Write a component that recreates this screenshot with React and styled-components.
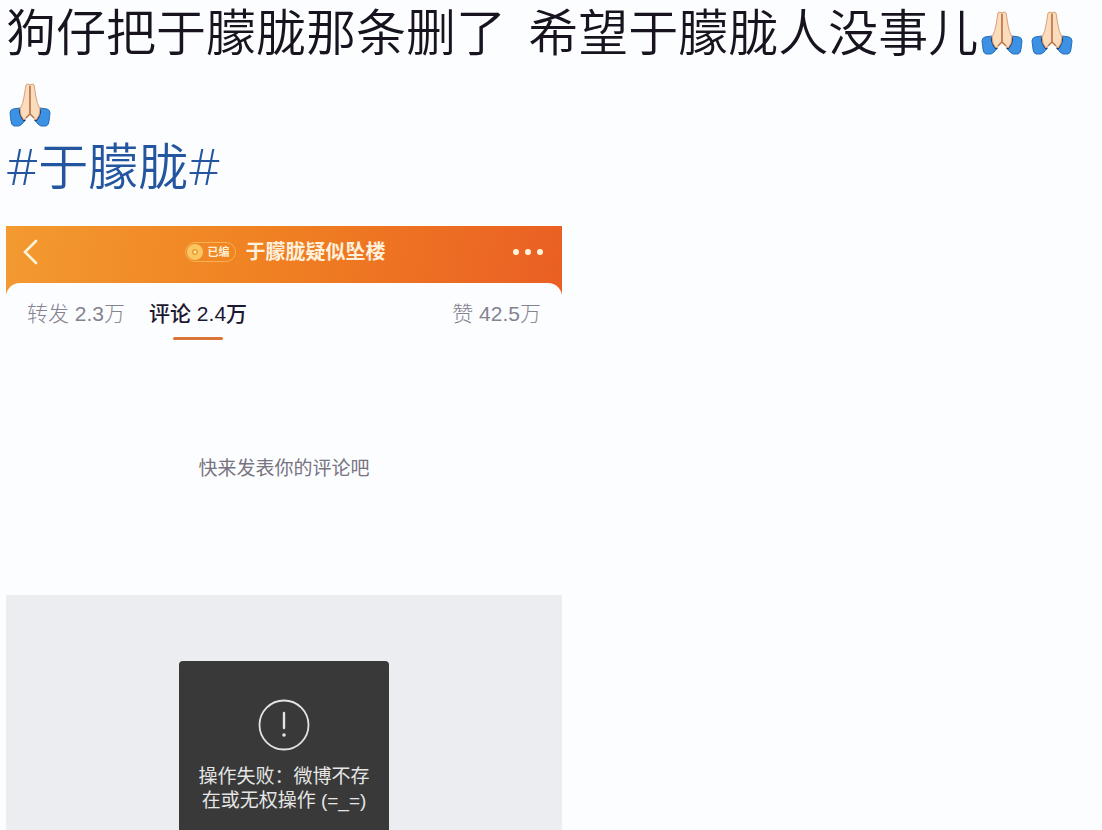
import React from 'react'
import styled, { createGlobalStyle } from 'styled-components'

const GlobalStyle = createGlobalStyle`
    * {
        box-sizing: border-box;
    }
    html, body {
        margin: 0;
        background: #fcfdff;
    }
    body {
        font-family: "Liberation Sans", "Noto Sans CJK SC", sans-serif;
    }
`
const Page = styled.main`
        min-height: 100vh;
        display: flex;
        flex-direction: column;
        padding: 0 6px;
`
const PostText = styled.p`
        margin: 0;
        font-family: "Noto Sans CJK SC", sans-serif;
        font-size: 50px;
        font-weight: 350;
        line-height: 58px;
        color: #17141f;
        white-space: pre-wrap;
`
const Emoji = styled.svg`
        width: 50px;
        height: 62px;
        padding-bottom: 16px;
        vertical-align: -21px;
`
const Topic = styled.a`
        align-self: flex-start;
        font-family: "Open Sans", "Noto Sans CJK SC", sans-serif;
        font-size: 50px;
        font-weight: 350;
        line-height: 44px;
        color: #2456a0;
        text-decoration: none;
`
const Card = styled.section`
        flex: 1;
        display: flex;
        flex-direction: column;
        width: 100%;
        max-width: 556px;
        margin-top: 38px;
        background: linear-gradient(100deg, #f39a31 0, #f08222 45%, #ea5f24 100%) no-repeat;
        background-size: 100% 68px;
`
const Header = styled.header`
        display: flex;
        align-items: center;
        justify-content: space-between;
        height: 57px;
        padding: 0 18px 6px 14px;
`
const IconButton = styled.button`
        display: flex;
        width: ${p => p.$width};
        padding: 0;
        border: 0;
        background: none;
        color: #fff3dc;
`
const Heading = styled.div`
        display: flex;
        align-items: center;
        gap: 10px;
`
const Badge = styled.span`
        display: flex;
        align-items: center;
        gap: 4px;
        height: 20px;
        padding: 0 5px 0 0;
        border: 1px solid #f8b052;
        border-radius: 10px;
        font-size: 11px;
        font-weight: bold;
        line-height: 18px;
        color: #fff0d2;
`
const Title = styled.h1`
        margin: 0;
        font-size: 20px;
        line-height: 28px;
        color: #fff0dc;
`
const Panel = styled.div`
        flex: 1;
        display: flex;
        flex-direction: column;
        border-radius: 14px 14px 0 0;
        background: #fcfdff;
`
const Tabs = styled.nav`
        display: flex;
        gap: 24px;
        height: 58px;
        padding: 16px 21px 0;
`
const Tab = styled.button`
        display: flex;
        flex-direction: column;
        align-items: center;
        gap: 8px;
        margin-left: ${p => p.$right ? 'auto' : '0'};
        padding: 0;
        border: 0;
        background: none;
        font-family: inherit;
        font-size: 21px;
        font-weight: ${p => p.$active ? 500 : 300};
        line-height: 30px;
        color: ${p => p.$active ? '#1c1830' : '#85828f'};

        &::after {
            content: "";
            width: 50px;
            height: 3px;
            border-radius: 2px;
            background: ${p => p.$active ? '#dc7437' : 'transparent'};
        }
`
const Empty = styled.p`
        display: flex;
        align-items: center;
        justify-content: center;
        height: 254px;
        margin: 0;
        padding-bottom: 4px;
        font-size: 19px;
        color: #77747f;
`
const Below = styled.div`
        flex: 1;
        display: flex;
        justify-content: center;
        padding-top: 66px;
        background: #ecedf1;
`
const Toast = styled.div`
        display: flex;
        flex-direction: column;
        align-items: center;
        gap: 14px;
        width: 210px;
        padding-top: 38px;
        border-radius: 4px 4px 0 0;
        background: #383938;
`
const Message = styled.p`
        margin: 0;
        font-size: 19px;
        line-height: 24px;
        text-align: center;
        color: #e6e6e6;
`

const Pray = () => {
  return (
    <Emoji viewBox="1 0 50 46" role="img" aria-label="🙏">
        <path d="M8 27 L15 26 Q16 33 20 38 Q17 43 14 44 L9 44 Q6 43 6 39 L5 31 Q5 28 8 27Z" fill="#3b92e4" stroke="#2a6fb8" strokeWidth="1" />
        <path d="M42 27 L35 26 Q34 33 30 38 Q33 43 36 44 L41 44 Q44 43 44 39 L45 31 Q45 28 42 27Z" fill="#3b92e4" stroke="#2a6fb8" strokeWidth="1" />
        <path d="M15 27 Q15 34 20 39 M35 27 Q35 34 30 39" fill="none" stroke="#1f3558" strokeWidth="2.4" />
        <path d="M21 3 Q23 1 25 3 L25 32 Q22 34 19 38 Q15 34 15 27 Q18 22 19 15Z" fill="#fbdcbc" stroke="#d9a077" strokeWidth="1" />
        <path d="M29 3 Q27 1 25 3 L25 32 Q28 34 31 38 Q35 34 35 27 Q32 22 31 15Z" fill="#fbdcbc" stroke="#d9a077" strokeWidth="1" />
        <path d="M25 4 V32 L21 36 M25 32 L29 36" fill="none" stroke="#b96f45" strokeWidth="1.4" />
    </Emoji>
  )
}

const App = () => {
  return (
   <>
    <GlobalStyle />
    <Page>
        <PostText>狗仔把于朦胧那条删了{'  '}希望于朦胧人没事儿<Pray /><Pray /><Pray /></PostText>
        <Topic href="#topic">#于朦胧#</Topic>
        <Card>
            <Header>
                <IconButton $width="38px" aria-label="返回">
                    <svg width="20" height="28" viewBox="0 0 20 28" fill="none" stroke="currentColor" strokeWidth="2.6" strokeLinecap="round">
                        <path d="M16 3 L5 14 L16 25" />
                    </svg>
                </IconButton>
                <Heading>
                    <Badge>
                        <svg width="18" height="18" viewBox="0 0 18 18">
                            <circle cx="9" cy="9" r="8" fill="#fbc763" />
                            <circle cx="9" cy="9" r="3" fill="#ee9a2c" />
                            <circle cx="9" cy="9" r="1.5" fill="#fff0b8" />
                        </svg>
                        已编
                    </Badge>
                    <Title>于朦胧疑似坠楼</Title>
                </Heading>
                <IconButton $width="32px" aria-label="更多">
                    <svg width="32" height="8" viewBox="0 0 32 8" fill="currentColor">
                        <circle cx="4" cy="4" r="3" />
                        <circle cx="16" cy="4" r="3" />
                        <circle cx="28" cy="4" r="3" />
                    </svg>
                </IconButton>
            </Header>
            <Panel>
                <Tabs>
                    <Tab>转发 2.3万</Tab>
                    <Tab $active>评论 2.4万</Tab>
                    <Tab $right>赞 42.5万</Tab>
                </Tabs>
                <Empty>快来发表你的评论吧</Empty>
                <Below>
                    <Toast role="alert">
                        <svg width="52" height="52" viewBox="0 0 52 52" fill="none" stroke="#e3e3e3">
                            <circle cx="26" cy="26" r="24.5" strokeWidth="1.8" />
                            <path d="M26 14 V29" strokeWidth="2.4" strokeLinecap="round" />
                            <circle cx="26" cy="36" r="1.8" fill="#e3e3e3" stroke="none" />
                        </svg>
                        <Message>操作失败：微博不存<br />在或无权操作 (=_=)</Message>
                    </Toast>
                </Below>
            </Panel>
        </Card>
    </Page>
   </>
  )
}

export default App
